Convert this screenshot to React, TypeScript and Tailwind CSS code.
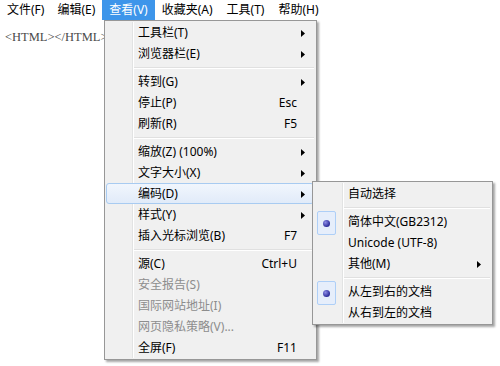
import React from "react";

type Item =
  | { sep: true }
  | { sep?: false; label: string; shortcut?: string; arrow?: boolean; disabled?: boolean; hot?: boolean; radio?: boolean };

const mainItems: Item[] = [
  { label: "工具栏(T)", arrow: true },
  { label: "浏览器栏(E)", arrow: true },
  { sep: true },
  { label: "转到(G)", arrow: true },
  { label: "停止(P)", shortcut: "Esc" },
  { label: "刷新(R)", shortcut: "F5" },
  { sep: true },
  { label: "缩放(Z) (100%)", arrow: true },
  { label: "文字大小(X)", arrow: true },
  { label: "编码(D)", arrow: true, hot: true },
  { label: "样式(Y)", arrow: true },
  { label: "插入光标浏览(B)", shortcut: "F7" },
  { sep: true },
  { label: "源(C)", shortcut: "Ctrl+U" },
  { label: "安全报告(S)", disabled: true },
  { label: "国际网站地址(I)", disabled: true },
  { label: "网页隐私策略(V)...", disabled: true },
  { label: "全屏(F)", shortcut: "F11" },
];

const subItems: Item[] = [
  { label: "自动选择" },
  { sep: true },
  { label: "简体中文(GB2312)", radio: true },
  { label: "Unicode (UTF-8)" },
  { label: "其他(M)", arrow: true },
  { sep: true },
  { label: "从左到右的文档", radio: true },
  { label: "从右到左的文档" },
];

const font = { fontFamily: '"Noto Sans", "Noto Sans CJK SC", sans-serif' };

function Arrow() {
  return (
    <svg width="4" height="7" viewBox="0 0 4 7" className="absolute right-[8px] top-[7px]">
      <path d="M0 0 L4 3.5 L0 7 Z" fill="#000" />
    </svg>
  );
}

function Menu({ items, left, top, width, colW }: { items: Item[]; left: number; top: number; width: number; colW: number }) {
  return (
    <div
      className="absolute border border-[#979797] bg-[#f0f0f0] py-[1px] pl-[1px] pr-[2px] shadow-[2px_2px_2px_rgba(0,0,0,0.35)]"
      style={{ left, top, width }}
    >
      <div className="absolute top-[1px] bottom-[1px] w-[1px] bg-[#e2e3e3]" style={{ left: colW }} />
      <div className="absolute top-[1px] bottom-[1px] w-[1px] bg-white" style={{ left: colW + 1 }} />
      {items.map((it, i) =>
        it.sep ? (
          <div key={i} className="relative flex h-[7px] flex-col justify-center" style={{ paddingLeft: colW + 1 }}>
            <div className="h-[1px] bg-[#e0e0e0]" />
            <div className="h-[1px] bg-white" />
          </div>
        ) : (
          <div
            key={i}
            className={
              "relative flex h-[21px] items-center text-[12px] leading-[21px] " +
              (it.hot ? "rounded-[3px] border border-[#a8cbf1] bg-gradient-to-b from-[#f1f6fd] to-[#e1ebf9]" : "border border-transparent") +
              (it.disabled ? " text-[#8d8d8d]" : " text-black")
            }
            style={font}
          >
            <div className="relative h-full shrink-0" style={{ width: colW - 1 }}>
              {it.radio && (
                <div className="absolute left-[2px] top-[-1px] h-[24px] w-[19px] rounded-[2px] border border-[#aecff7] bg-[#e6eefb] flex items-center justify-center">
                  <div className="h-[7px] w-[7px] rounded-full bg-[radial-gradient(circle_at_35%_35%,#8c8ce6,#2c2c9a_70%)]" />
                </div>
              )}
            </div>
            <div className="flex-1 pl-[5px] whitespace-nowrap">{it.label}</div>
            {it.shortcut && <div className="pr-[16px] whitespace-nowrap">{it.shortcut}</div>}
            {it.arrow && <Arrow />}
          </div>
        )
      )}
    </div>
  );
}

export default function App() {
  const bar = ["文件(F)", "编辑(E)", "查看(V)", "收藏夹(A)", "工具(T)", "帮助(H)"];
  return (
    <div className="relative h-[366px] w-[500px] overflow-hidden bg-white">
      <div className="flex h-[20px] items-center text-[12px]" style={font}>
        {bar.map((b, i) => (
          <div
            key={i}
            className={
              "flex h-full items-center whitespace-nowrap " +
              (i === 0 ? "pl-[7px] pr-[6px] " : "px-[7px] ") +
              (i === 2 ? "bg-[#3d95ea] text-white" : "text-black")
            }
          >
            {b}
          </div>
        ))}
      </div>
      <div className="pl-[5px] pt-[8px] text-[12.5px] text-[#4a4a4a]" style={{ fontFamily: '"Liberation Serif", serif' }}>
        {"<HTML></HTML>"}
      </div>
      <Menu items={mainItems} left={104} top={20} width={213} colW={27} />
      <Menu items={subItems} left={312} top={181} width={181} colW={29} />
    </div>
  );
}
